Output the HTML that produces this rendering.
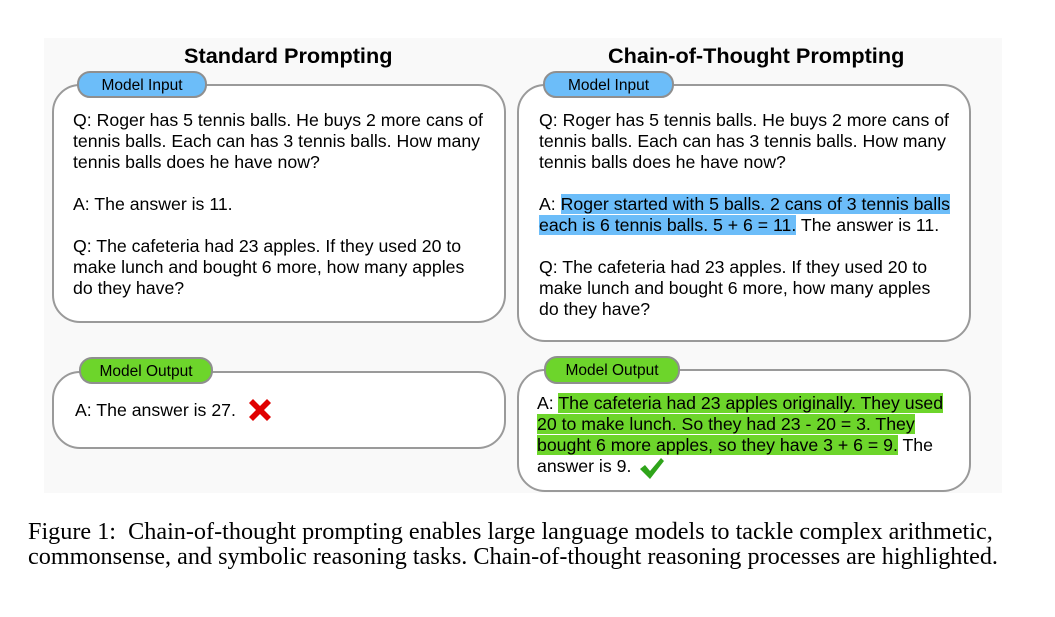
<!DOCTYPE html>
<html><head><style>
*{margin:0;padding:0;box-sizing:border-box}
body{width:1055px;height:617px;background:#fff;position:relative;overflow:hidden;font-family:"Liberation Sans",Arial,sans-serif;color:#000}
.fig{position:absolute;left:44px;top:38px;width:958px;height:455px;background:#f9f9f9}
.box{position:absolute;background:#fff;border:2.5px solid #9a9a9a;border-radius:28px}
.tab{position:absolute;border:2.5px solid #8f8f8f;border-radius:13px;font-size:15.5px;text-align:center;line-height:25px}
.blue{background:#6cbdf9}
.green{background:#6dd52b}
.t{position:absolute;font-size:17.7px;line-height:21px;white-space:nowrap}
.h{position:absolute;font-size:21.7px;font-weight:bold;white-space:nowrap}
.hb{background:#6cbdf9}
.hg{background:#6dd52b}
.cap{position:absolute;left:28px;font-family:"Liberation Serif","Times New Roman",serif;font-size:24.2px;white-space:nowrap}
</style></head><body>
<div class="fig"></div>
<div class="h" style="left:184px;top:43px">Standard Prompting</div>
<div class="h" style="left:608px;top:43px">Chain-of-Thought Prompting</div>

<div class="box" style="left:52px;top:84px;width:454px;height:239px"></div>
<div class="tab blue" style="left:77px;top:71px;width:130px;height:27px">Model Input</div>
<div class="t" style="left:73px;top:110px">Q: Roger has 5 tennis balls. He buys 2 more cans of<br>tennis balls. Each can has 3 tennis balls. How many<br>tennis balls does he have now?<br><br>A: The answer is 11.<br><br>Q: The cafeteria had 23 apples. If they used 20 to<br>make lunch and bought 6 more, how many apples<br>do they have?</div>

<div class="box" style="left:517px;top:84px;width:454px;height:258px"></div>
<div class="tab blue" style="left:543px;top:71px;width:131px;height:27px">Model Input</div>
<div class="t" style="left:539px;top:110px">Q: Roger has 5 tennis balls. He buys 2 more cans of<br>tennis balls. Each can has 3 tennis balls. How many<br>tennis balls does he have now?<br><br>A: <span class="hb">Roger started with 5 balls. 2 cans of 3 tennis balls</span><br><span class="hb">each is 6 tennis balls. 5 + 6 = 11.</span> The answer is 11.<br><br>Q: The cafeteria had 23 apples. If they used 20 to<br>make lunch and bought 6 more, how many apples<br>do they have?</div>

<div class="box" style="left:52px;top:371px;width:454px;height:78px"></div>
<div class="tab green" style="left:79px;top:357px;width:134px;height:27px">Model Output</div>
<div class="t" style="left:75px;top:400px">A: The answer is 27.</div>
<svg style="position:absolute;left:246px;top:396px" width="28" height="28" viewBox="0 0 28 28"><path d="M3 7 L7 3 L14 10 L21 3 L25 7 L18 14 L25 21 L21 25 L14 18 L7 25 L3 21 L10 14Z" fill="#e00000"/></svg>

<div class="box" style="left:517px;top:369px;width:454px;height:123px"></div>
<div class="tab green" style="left:544px;top:356px;width:136px;height:28px">Model Output</div>
<div class="t" style="left:537px;top:393px">A: <span class="hg">The cafeteria had 23 apples originally. They used</span><br><span class="hg">20 to make lunch. So they had 23 - 20 = 3. They</span><br><span class="hg">bought 6 more apples, so they have 3 + 6 = 9.</span> The<br>answer is 9.</div>
<svg style="position:absolute;left:639px;top:456px" width="26" height="24" viewBox="0 0 26 24"><path d="M1 13 L6 9 L11 15 L22 2 L25 5 L11 23Z" fill="#2fa41a"/></svg>

<div class="cap" style="top:518px">Figure 1:&nbsp;&nbsp;Chain-of-thought prompting enables large language models to tackle complex arithmetic,</div>
<div class="cap" style="top:543px">commonsense, and symbolic reasoning tasks. Chain-of-thought reasoning processes are highlighted.</div>
</body></html>
